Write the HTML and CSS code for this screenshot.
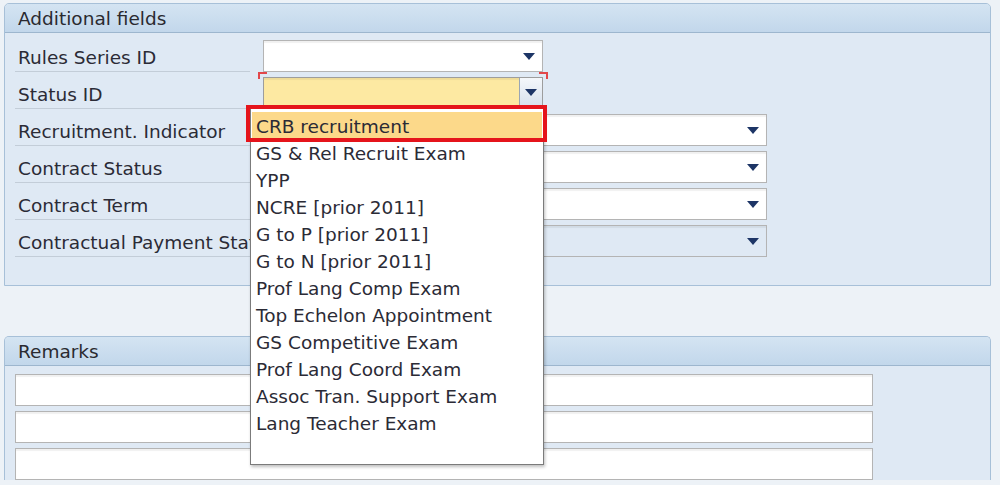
FILE: index.html
```html
<!DOCTYPE html>
<html lang="en">
<head>
  <meta charset="UTF-8">
  <title>Additional fields</title>
  <link rel="stylesheet" href="styles.css">
</head>
<body>

  <div class="page">
    <div class="group">
      <div class="group-head">Additional fields</div>
      <div class="group-body">
        <div class="row">
          <div class="label">Rules Series ID</div>
          <div class="field short"><span class="arrow"></span></div>
        </div>
        <div class="row">
          <div class="label">Status ID</div>
          <div class="field short focus">
            <span class="btn-drop"><span class="arrow"></span></span>
            <span class="corner tl"></span>
            <span class="corner tr"></span>
            <span class="corner bl"></span>
          </div>
        </div>
        <div class="row">
          <div class="label">Recruitment. Indicator</div>
          <div class="field long"><span class="arrow"></span></div>
        </div>
        <div class="row">
          <div class="label">Contract Status</div>
          <div class="field long"><span class="arrow"></span></div>
        </div>
        <div class="row">
          <div class="label">Contract Term</div>
          <div class="field long"><span class="arrow"></span></div>
        </div>
        <div class="row">
          <div class="label">Contractual Payment Status</div>
          <div class="field long disabled"><span class="arrow"></span></div>
        </div>
      </div>
    </div>

    <div class="group remarks">
      <div class="group-head">Remarks</div>
      <div class="group-body">
        <div class="text-line"></div>
        <div class="text-line"></div>
        <div class="text-line"></div>
      </div>
    </div>

    <!-- open value list for Status ID -->
    <div class="dropdown">
      <div class="item selected">CRB recruitment</div>
      <div class="item">GS &amp; Rel Recruit Exam</div>
      <div class="item">YPP</div>
      <div class="item">NCRE [prior 2011]</div>
      <div class="item">G to P [prior 2011]</div>
      <div class="item">G to N [prior 2011]</div>
      <div class="item">Prof Lang Comp Exam</div>
      <div class="item">Top Echelon Appointment</div>
      <div class="item">GS Competitive Exam</div>
      <div class="item">Prof Lang Coord Exam</div>
      <div class="item">Assoc Tran. Support Exam</div>
      <div class="item">Lang Teacher Exam</div>
    </div>
    <div class="highlight"></div>
  </div>

</body>
</html>
```

FILE: styles.css
```css
body {
  margin: 0;
  background-color: #edf2f7;
  font-family: 'DejaVu Sans', sans-serif;
  font-size: 18.5px;
  color: #2b2b36;
  overflow: hidden;
}

.page {
  position: relative;
  padding: 3px 9px 0 4px;
  height: 482px;
}

.group {
  border: 1px solid #a7c0d8;
  border-radius: 5px 5px 0 0;
  background: #dfe9f4;
}

.group-head {
  height: 28px;
  line-height: 30px;
  padding-left: 13px;
  background: linear-gradient(#d4e4f2, #c2d7eb);
  border-bottom: 1px solid #9db6ce;
  border-radius: 4px 4px 0 0;
  color: #2a2a30;
}

.group-body {
  padding: 5px 0 25px 10px;
}

.row {
  display: flex;
  align-items: flex-start;
  height: 37px;
}

.label {
  flex: none;
  width: 232px;
  height: 33px;
  line-height: 40px;
  padding-left: 3px;
  border-bottom: 1px solid #c3cdd8;
  white-space: nowrap;
  margin-right: 13px;
}

.field {
  position: relative;
  height: 32px;
  margin-top: 2px;
  box-sizing: border-box;
  border: 1px solid #b4b4b4;
  background: #fff;
  box-shadow: inset 0 2px 1px rgba(0, 0, 0, 0.06);
}

.field.short {
  width: 280px;
}

.field.long {
  width: 504px;
}

.field.disabled {
  background: #dfe9f4;
}

.field.focus {
  background: #fde9a2;
  border-color: #9d9d9d;
}

.arrow {
  position: absolute;
  right: 7px;
  top: 12px;
  width: 0;
  height: 0;
  border-left: 6px solid transparent;
  border-right: 6px solid transparent;
  border-top: 7px solid #1d3566;
}

.btn-drop {
  position: absolute;
  right: 0;
  top: 0;
  width: 22px;
  height: 29px;
  border-left: 1px solid #9aa6b4;
  background: linear-gradient(#f4f7fb, #d6e0ec);
}

.btn-drop .arrow {
  right: 5px;
  top: 11px;
}

.corner {
  position: absolute;
  width: 7px;
  height: 5px;
  border: 0 solid #e2474a;
}

.corner.tl {
  left: -6px;
  top: -6px;
  border-left-width: 2px;
  border-top-width: 2px;
}

.corner.tr {
  right: -6px;
  top: -6px;
  border-right-width: 2px;
  border-top-width: 2px;
}

.corner.bl {
  left: -6px;
  bottom: -6px;
  border-left-width: 2px;
  border-bottom-width: 2px;
}

.remarks {
  margin-top: 50px;
  border-bottom: none;
}

.remarks .group-body {
  padding: 8px 0 0 10px;
}

.text-line {
  width: 858px;
  height: 32px;
  margin-bottom: 5px;
  box-sizing: border-box;
  border: 1px solid #b4b4b4;
  background: #fff;
  box-shadow: inset 0 2px 1px rgba(0, 0, 0, 0.06);
}

.dropdown {
  position: absolute;
  left: 250px;
  top: 108px;
  width: 294px;
  height: 357px;
  box-sizing: border-box;
  padding: 3px 1px 0;
  background: #fff;
  border: 1px solid #7b7b7b;
  box-shadow: 1px 2px 3px rgba(0, 0, 0, 0.25);
}

.item {
  height: 27px;
  line-height: 29px;
  padding-left: 4px;
  white-space: nowrap;
}

.item.selected {
  background: #fcd98a;
}

.highlight {
  position: absolute;
  left: 246px;
  top: 105px;
  width: 301px;
  height: 37px;
  box-sizing: border-box;
  border: 4px solid #e5141b;
}
```
